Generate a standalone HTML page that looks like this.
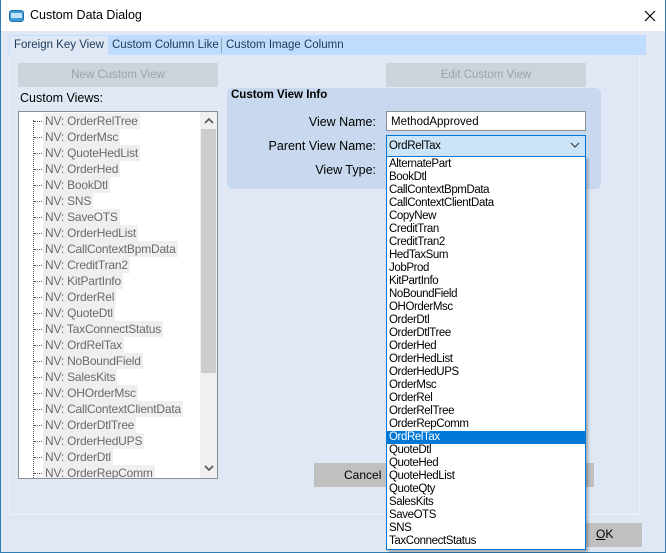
<!DOCTYPE html>
<html><head><meta charset="utf-8"><style>
*{box-sizing:border-box;margin:0;padding:0}
body{width:666px;height:553px;overflow:hidden;font-family:"Liberation Sans",sans-serif;font-size:12px;position:relative;background:#dfe8f4}
.a{position:absolute}
.win{left:0;top:0;width:666px;height:553px;border:1px solid #2f7bb3;border-top:none}
.title{left:0;top:0;width:666px;height:31px;background:#fff;border-left:1px solid #2f7bb3;border-right:1px solid #2f7bb3}
.btn{background:#cdd3da;color:#9aa3ad;text-align:center;line-height:24px;font-size:11.5px}
.tree div{height:16px;line-height:16px;position:relative;white-space:nowrap}
.tree span{background:#efefef;color:#6a6a6a;padding:0 2px;margin-left:24px;display:inline-block;line-height:16px;letter-spacing:-0.2px}
.tree div:before{content:"";position:absolute;left:15px;top:8px;width:8px;border-top:1px dotted #555}
.dd div{height:13.03px;line-height:13px;padding-left:2px;font-size:11.5px;letter-spacing:-0.4px;color:#000}
.lbl{font-size:12.5px;color:#000;text-align:right;width:160px}
</style></head><body>
<div class="a win"></div>
<div class="a title"></div>
<div class="a" style="left:9px;top:10px;width:15px;height:12px;border-radius:3px;background:#3d9ad6;border:1px solid #1f6fa8"></div>
<div class="a" style="left:11px;top:13px;width:11px;height:5px;background:#bfe3fa"></div>
<div class="a" style="left:30px;top:8px;font-size:12.5px">Custom Data Dialog</div>
<svg class="a" style="left:644px;top:10px" width="12" height="12"><path d="M1 1L11 11M11 1L1 11" stroke="#000" stroke-width="1.2"/></svg>
<div class="a" style="left:9px;top:35px;width:637px;height:20px;background:#bfdcff"></div>
<div class="a" style="left:10px;top:36px;width:98px;height:20px;background:#dfe8f4"></div>
<div class="a" style="left:14px;top:39px;font-size:11.5px;color:#1c3a5c">Foreign Key View</div>
<div class="a" style="left:112px;top:39px;font-size:11.5px;color:#1c3a5c">Custom Column Like</div>
<div class="a" style="left:221px;top:38px;height:15px;border-left:1px solid #8aa"></div>
<div class="a" style="left:226px;top:39px;font-size:11.5px;color:#1c3a5c">Custom Image Column</div>
<div class="a" style="left:9px;top:55px;width:631px;height:460px;border-right:1px solid #eef2f8;border-bottom:1px solid #eef2f8;border-left:1px solid #eef2f8"></div>
<div class="a btn" style="left:18px;top:63px;width:200px;height:24px">New Custom View</div>
<div class="a btn" style="left:386px;top:63px;width:200px;height:24px">Edit Custom View</div>
<div class="a" style="left:20px;top:91px;font-size:12.5px">Custom Views:</div>
<div class="a" style="left:18px;top:111px;width:200px;height:368px;background:#fff;border:1px solid #8a8f96;overflow:hidden">
<div class="a" style="left:14px;top:8px;height:370px;border-left:1px dotted #555"></div>
<div class="a tree" style="left:0;top:1px;width:181px;font-size:12px">
<div><span>NV: OrderRelTree</span></div><div><span>NV: OrderMsc</span></div><div><span>NV: QuoteHedList</span></div><div><span>NV: OrderHed</span></div><div><span>NV: BookDtl</span></div><div><span>NV: SNS</span></div><div><span>NV: SaveOTS</span></div><div><span>NV: OrderHedList</span></div><div><span>NV: CallContextBpmData</span></div><div><span>NV: CreditTran2</span></div><div><span>NV: KitPartInfo</span></div><div><span>NV: OrderRel</span></div><div><span>NV: QuoteDtl</span></div><div><span>NV: TaxConnectStatus</span></div><div><span>NV: OrdRelTax</span></div><div><span>NV: NoBoundField</span></div><div><span>NV: SalesKits</span></div><div><span>NV: OHOrderMsc</span></div><div><span>NV: CallContextClientData</span></div><div><span>NV: OrderDtlTree</span></div><div><span>NV: OrderHedUPS</span></div><div><span>NV: OrderDtl</span></div><div><span>NV: OrderRepComm</span></div>
</div>
<div class="a" style="left:181px;top:0;width:17px;height:366px;background:#f0f0f0"></div>
<div class="a" style="left:182px;top:17px;width:15px;height:244px;background:#cdcdcd"></div>
<svg class="a" style="left:185px;top:5px" width="10" height="8"><path d="M1 6L5 2L9 6" stroke="#555" stroke-width="1.6" fill="none"/></svg>
<svg class="a" style="left:185px;top:352px" width="10" height="8"><path d="M1 2L5 6L9 2" stroke="#555" stroke-width="1.6" fill="none"/></svg>
</div>
<div class="a" style="left:227px;top:88px;width:374px;height:101px;background:#c8d9ef;border-radius:5px"></div>
<div class="a" style="left:231px;top:89px;font-size:11.5px;font-weight:bold">Custom View Info</div>
<div class="a lbl" style="left:216px;top:115px">View Name:</div>
<div class="a lbl" style="left:216px;top:139px">Parent View Name:</div>
<div class="a lbl" style="left:216px;top:163px">View Type:</div>
<div class="a" style="left:386px;top:111px;width:200px;height:20px;background:#fff;border:1px solid #8a8f96;padding:4px 4px 0;font-size:11.5px">MethodApproved</div>
<div class="a" style="left:386px;top:135px;width:200px;height:22px;background:#cce4f7;border:1px solid #0078d7;padding:4px 2px;font-size:11.5px;letter-spacing:-0.3px">OrdRelTax</div>
<svg class="a" style="left:570px;top:142px" width="10" height="7"><path d="M1 1L5 5L9 1" stroke="#333" stroke-width="1.1" fill="none"/></svg>
<div class="a" style="left:314px;top:463px;width:280px;height:24px;background:#c0c0c0"></div>
<div class="a" style="left:344px;top:468px;font-size:12px">Cancel</div>
<div class="a" style="left:540px;top:523px;width:102px;height:24px;background:#c0c0c0"></div>
<div class="a" style="left:596px;top:527px;font-size:12px"><u>O</u>K</div>
<div class="a dd" style="left:386px;top:156px;width:200px;height:394px;background:#fff;border:1px solid #0078d7;box-shadow:2px 2px 3px rgba(0,0,0,.3);padding-top:1px">
<div>AlternatePart</div><div>BookDtl</div><div>CallContextBpmData</div><div>CallContextClientData</div><div>CopyNew</div><div>CreditTran</div><div>CreditTran2</div><div>HedTaxSum</div><div>JobProd</div><div>KitPartInfo</div><div>NoBoundField</div><div>OHOrderMsc</div><div>OrderDtl</div><div>OrderDtlTree</div><div>OrderHed</div><div>OrderHedList</div><div>OrderHedUPS</div><div>OrderMsc</div><div>OrderRel</div><div>OrderRelTree</div><div>OrderRepComm</div><div style="background:#0078d7;color:#fff">OrdRelTax</div><div>QuoteDtl</div><div>QuoteHed</div><div>QuoteHedList</div><div>QuoteQty</div><div>SalesKits</div><div>SaveOTS</div><div>SNS</div><div>TaxConnectStatus</div>
</div>
</body></html>
